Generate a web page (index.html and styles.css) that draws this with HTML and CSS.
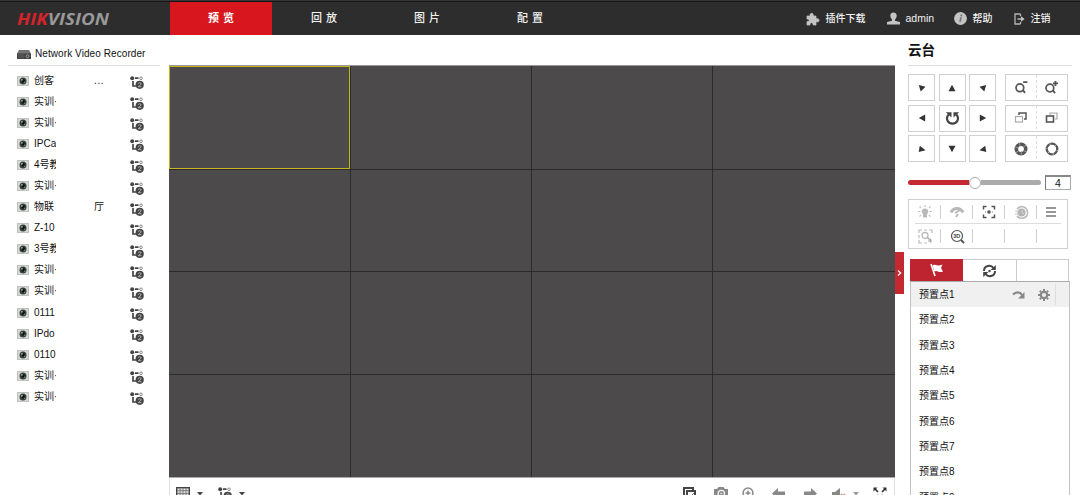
FILE: index.html
```html
<!DOCTYPE html>
<html lang="zh-CN">
<head>
<meta charset="utf-8">
<title>Network Video Recorder</title>
<link rel="stylesheet" href="styles.css">
</head>
<body>
<svg class="sprite" aria-hidden="true">
  <symbol id="camera" viewBox="0 0 12 10"><rect x=".5" y=".5" width="11" height="9" fill="#d5d9d6" stroke="#bfc3c0"/><circle cx="6" cy="5" r="3.5" fill="#39413d"/><circle cx="6.300" cy="5" r="1.8" fill="#0c1210"/><circle cx="4.900" cy="3.800" r=".9" fill="#a8b5af"/><circle cx="7.500" cy="6.300" r=".7" fill="#7f9188"/></symbol>
  <symbol id="stream" viewBox="0 0 14 13"><circle cx="2.200" cy="2.200" r="2" fill="#444"/><path d="M5 2.200h3.500M3 5v5h3" fill="none" stroke="#444" stroke-width="1.700"/><circle cx="11" cy="2.300" r="1.300" fill="none" stroke="#888"/><circle cx="9.700" cy="8.800" r="4.100" fill="#454545"/><path d="M8.200 7.500q1.500-1.600 3 0q0 1-3 3.200h3.200" fill="none" stroke="#bbb" stroke-width=".9"/></symbol>
  <symbol id="caret" viewBox="0 0 6 4"><path d="M0 0h6L3 3.600z" fill="#444"/></symbol>
  <symbol id="tri" viewBox="0 0 8 8"><path d="M4 .8l3.500 6.400h-7z" fill="#333"/></symbol>
  <symbol id="corner-top" viewBox="0 0 8 8"><path d="M.800 1l6.700 1.700-4.800 4.800z" fill="#333"/></symbol>
  <symbol id="corner-bottom" viewBox="0 0 8 8"><path d="M1.800 .7l5.700 4.500L.700 7z" fill="#333"/></symbol>
</svg>

<header class="topbar">
  <div class="logo"><svg width="96" height="20"><text class="logo-text" x="2" y="16.500" textLength="92" lengthAdjust="spacingAndGlyphs"><tspan class="logo-red">HIK</tspan>VISION</text></svg></div>
  <nav class="tabs">
    <a class="tab active">预览</a><a class="tab">回放</a><a class="tab">图片</a><a class="tab">配置</a>
  </nav>
  <div class="tools">
    <span class="tool plugin"><svg width="14" height="14" viewBox="0 0 14 14"><path d="M1 4h3.200C3 1 7.800 0 7.300 4H10v3c3-1.500 4.500 2.300 1.500 3L10 9.500V13H7.200C7 9.800 3.700 10 4 13H1V9.500C4 9.800 4 7 1 7z" fill="#c4c4c4" stroke="#c4c4c4" stroke-width=".7"/></svg>插件下载</span>
    <span class="tool user"><svg width="13" height="13" viewBox="0 0 13 13"><path d="M3.300 3.500C3.300-.4 9.700-.4 9.700 3.500C9.700 5.500 8.700 6.600 8 7.500V8.700L13 10v2.500H0V10l5-1.300V7.500C4.300 6.600 3.300 5.500 3.300 3.500z" fill="#c4c4c4"/></svg>admin</span>
    <span class="tool help"><svg width="13" height="13" viewBox="0 0 13 13"><circle cx="6.500" cy="6.500" r="6.400" fill="#c4c4c4"/><path d="M6 5.600h1.500L6.700 9.800H5.300M6.800 2.800h1.400l-.3 1.400H6.500z" fill="#777" stroke="#777" stroke-width=".4"/></svg>帮助</span>
    <span class="tool logout"><svg width="11" height="12" viewBox="0 0 11 12"><path d="M6.500 1H1v10h5.500M6.500 1v2.300M6.500 8.700V11M3.500 6h4" fill="none" stroke="#b4b4b4" stroke-width="1.300"/><path d="M7 3.200L10.600 6 7 8.800z" fill="#c4c4c4"/></svg>注销</span>
  </div>
</header>

<main class="workspace">
  <aside class="devices">
    <div class="recorder"><svg width="14" height="9" viewBox="0 0 14 9"><path d="M2 0h10l2 3.500V9H0V3.500z" fill="#747474"/><path d="M0 3.500h14V9H0z" fill="#444"/><path d="M1 5h6M1 7h6" stroke="#777" stroke-width=".6"/><circle cx="10.500" cy="6.300" r="1.400" fill="none" stroke="#bbb" stroke-width=".7"/></svg><span>Network Video Recorder</span></div>
    <ul class="channels">
      <li><svg class="cam"><use href="#camera"/></svg><span class="name">创客</span><span class="end dots">...</span><svg class="stream"><use href="#stream"/></svg></li>
      <li><svg class="cam"><use href="#camera"/></svg><span class="name">实训·</span><span class="end"></span><svg class="stream"><use href="#stream"/></svg></li>
      <li><svg class="cam"><use href="#camera"/></svg><span class="name">实训·</span><span class="end"></span><svg class="stream"><use href="#stream"/></svg></li>
      <li><svg class="cam"><use href="#camera"/></svg><span class="name">IPCa</span><span class="end"></span><svg class="stream"><use href="#stream"/></svg></li>
      <li><svg class="cam"><use href="#camera"/></svg><span class="name">4号教</span><span class="end"></span><svg class="stream"><use href="#stream"/></svg></li>
      <li><svg class="cam"><use href="#camera"/></svg><span class="name">实训·</span><span class="end"></span><svg class="stream"><use href="#stream"/></svg></li>
      <li><svg class="cam"><use href="#camera"/></svg><span class="name">物联</span><span class="end">厅</span><svg class="stream"><use href="#stream"/></svg></li>
      <li><svg class="cam"><use href="#camera"/></svg><span class="name">Z-10</span><span class="end"></span><svg class="stream"><use href="#stream"/></svg></li>
      <li><svg class="cam"><use href="#camera"/></svg><span class="name">3号教</span><span class="end"></span><svg class="stream"><use href="#stream"/></svg></li>
      <li><svg class="cam"><use href="#camera"/></svg><span class="name">实训·</span><span class="end"></span><svg class="stream"><use href="#stream"/></svg></li>
      <li><svg class="cam"><use href="#camera"/></svg><span class="name">实训·</span><span class="end"></span><svg class="stream"><use href="#stream"/></svg></li>
      <li><svg class="cam"><use href="#camera"/></svg><span class="name">0111</span><span class="end"></span><svg class="stream"><use href="#stream"/></svg></li>
      <li><svg class="cam"><use href="#camera"/></svg><span class="name">IPdo</span><span class="end"></span><svg class="stream"><use href="#stream"/></svg></li>
      <li><svg class="cam"><use href="#camera"/></svg><span class="name">0110</span><span class="end"></span><svg class="stream"><use href="#stream"/></svg></li>
      <li><svg class="cam"><use href="#camera"/></svg><span class="name">实训·</span><span class="end"></span><svg class="stream"><use href="#stream"/></svg></li>
      <li><svg class="cam"><use href="#camera"/></svg><span class="name">实训·</span><span class="end"></span><svg class="stream"><use href="#stream"/></svg></li>
    </ul>
  </aside>

  <section class="viewer">
    <div class="wall">
      <div class="cell selected"></div><div class="cell"></div><div class="cell"></div><div class="cell"></div>
      <div class="cell"></div><div class="cell"></div><div class="cell"></div><div class="cell"></div>
      <div class="cell"></div><div class="cell"></div><div class="cell"></div><div class="cell"></div>
      <div class="cell"></div><div class="cell"></div><div class="cell"></div><div class="cell"></div>
    </div>
    <div class="playbar">
      <div class="group left">
        <svg width="14" height="13" viewBox="0 0 14 13"><rect x=".7" y=".7" width="12.600" height="11.600" fill="#ddd" stroke="#444" stroke-width="1.400"/><path d="M4 1v11M7 1v11M10 1v11M1 3.700h12M1 6.500h12M1 9.300h12" stroke="#777" stroke-width=".9"/></svg>
        <svg class="caret"><use href="#caret"/></svg>
        <svg class="stream second"><use href="#stream"/></svg>
        <svg class="caret"><use href="#caret"/></svg>
      </div>
      <div class="group right">
        <svg width="13" height="13" viewBox="0 0 13 13"><path d="M1 10V1h9v2M4 12V4h8v5" fill="none" stroke="#444" stroke-width="2"/><path d="M6 11l5-5" stroke="#777"/></svg>
        <svg width="14" height="13" viewBox="0 0 14 13"><path d="M0 2h3l1.500-2h5L11 2h3v10H0z" fill="#888"/><circle cx="7.300" cy="6.500" r="3.200" fill="#888" stroke="#f4f4f4" stroke-width="1.300"/><circle cx="7.300" cy="6.500" r="1" fill="#ddd"/></svg>
        <svg width="13" height="14" viewBox="0 0 13 14"><circle cx="6" cy="6" r="4.900" fill="none" stroke="#888" stroke-width="1.500"/><path d="M3.500 6h5M6 3.500v5M9.500 9.500l3 3" stroke="#888" stroke-width="1.500"/></svg>
        <svg width="14" height="12" viewBox="0 0 14 12"><path d="M6 0v3.500h7V8H6v3L0 5.500z" fill="#888"/></svg>
        <svg width="14" height="12" viewBox="0 0 14 12"><path d="M8 0v3.500H1V8h7v3l6-5.500z" fill="#888"/></svg>
        <svg width="14" height="12" viewBox="0 0 14 12"><path d="M0 4h3l5-4v12L3 9H0z" fill="#888"/><path d="M9 6l4 4M13 6l-4 4" stroke="#d87878" stroke-width="1.500"/></svg>
        <svg class="caret pale"><use href="#caret"/></svg>
        <svg width="14" height="13" viewBox="0 0 14 13"><path d="M.5 4.500v-4h4zM9.500.500h4v4zM.500 8.500v4h4zM13.500 8.500v4h-4z" fill="#333"/><path d="M2 2l3 3M12 2L9 5M2 11l3-3M12 11L9 8" stroke="#333" stroke-width="1.700"/></svg>
      </div>
    </div>
  </section>

  <aside class="ptz">
    <div class="handle"><svg width="5" height="8" viewBox="0 0 5 8"><path d="M1 1.500L3.700 4 1 6.500" fill="none" stroke="#fff" stroke-width="1.200"/></svg></div>
    <h2>云台</h2>
    <div class="controls">
      <div class="pad">
        <button><svg class="arrow"><use href="#corner-top"/></svg></button>
        <button><svg class="arrow"><use href="#tri"/></svg></button>
        <button><svg class="arrow flip"><use href="#corner-top"/></svg></button>
        <button><svg class="arrow w"><use href="#tri"/></svg></button>
        <button><svg width="15" height="15" viewBox="0 0 15 15"><path d="M3.700 3.500C0 7.500 3 12.700 7.500 12.700s7.500-5.200 3.800-9.200" fill="none" stroke="#444" stroke-width="2.200"/><path d="M.800 1.200h5.700v5.200zM14.200 1.200H8.500v5.200z" fill="#444"/></svg></button>
        <button><svg class="arrow e"><use href="#tri"/></svg></button>
        <button><svg class="arrow"><use href="#corner-bottom"/></svg></button>
        <button><svg class="arrow s"><use href="#tri"/></svg></button>
        <button><svg class="arrow flip"><use href="#corner-bottom"/></svg></button>
      </div>
      <div class="lens">
        <div class="pair">
          <svg width="15" height="15" viewBox="0 0 14 14"><circle cx="5.500" cy="7.300" r="3.600" fill="none" stroke="#555" stroke-width="1.600"/><path d="M8.300 9.500l2 2.500M8.500 2h4" stroke="#555" stroke-width="1.700"/></svg>
          <svg width="15" height="15" viewBox="0 0 14 14"><circle cx="5.500" cy="7.500" r="3.600" fill="none" stroke="#555" stroke-width="1.600"/><path d="M8.300 9.700l2 2.500M8.300 3.200H13M10.700 1v4.500" stroke="#555" stroke-width="1.700"/></svg>
        </div>
        <div class="pair">
          <svg width="14" height="14" viewBox="0 0 14 14"><path d="M5 4V2h7v6h-2" fill="none" stroke="#555" stroke-width="1.500"/><rect x="1.500" y="5.500" width="7" height="5.500" fill="#fff" stroke="#aaa" stroke-width="1.200"/></svg>
          <svg width="14" height="14" viewBox="0 0 14 14"><path d="M5 4V2h7v6h-2" fill="none" stroke="#aaa" stroke-width="1.200"/><rect x="1.500" y="5" width="7" height="6" fill="#fff" stroke="#555" stroke-width="1.600"/></svg>
        </div>
        <div class="pair">
          <svg width="14" height="14" viewBox="0 0 14 14"><circle cx="7" cy="7" r="4.700" fill="none" stroke="#555" stroke-width="3.600"/><path d="M5 .5l1.500 4M12.500 3L9 5.300M13 10l-4-1.500M7 13.500L7.500 9M1.500 11L5 8.500M1 5l4 1" stroke="#aaa" stroke-width=".8"/></svg>
          <svg width="14" height="14" viewBox="0 0 14 14"><circle cx="7" cy="7" r="5.300" fill="none" stroke="#555" stroke-width="2.300"/><path d="M4.500 .5l.8 2.500M12 2l-2 2M13.500 9l-2-.7M8.500 13.500L8 11M2 12l2-2M.5 6l2 .5" stroke="#ccc" stroke-width=".8"/></svg>
        </div>
      </div>
    </div>
    <div class="speed"><div class="track"><div class="fill"></div><div class="thumb"></div><div class="rest"></div></div><div class="value">4</div></div>
    <div class="toolbox">
      <div class="toolrow first">
        <span><svg width="16" height="16" viewBox="0 0 16 16"><path d="M6 10.500C3 6.500 6 4.500 8 4.500s5 2 2 6v3H6z" fill="#b9b9b9"/><path d="M8 1v2M2.500 2.500L4 4M13.500 2.500L12 4M1 7.500h2.500M12.500 7.500H15M2.500 12.500L4 11M13.500 12.500L12 11" stroke="#c4c4c4" stroke-width="1.200"/></svg></span>
        <span><svg width="16" height="14" viewBox="0 0 16 14"><path d="M2 7.500C4.500 2 11.500 2 14 7.500" fill="none" stroke="#b8b8b8" stroke-width="3"/><path d="M6 8l5-3M7 12l2-3" stroke="#b8b8b8" stroke-width="2"/></svg></span>
        <span><svg width="14" height="14" viewBox="0 0 14 14"><path d="M1.500 4.500v-3h3M9.500 1.500h3v3M12.500 9.500v3h-3M4.500 12.500h-3v-3" fill="none" stroke="#555" stroke-width="1.500"/><circle cx="7" cy="7" r="1.800" fill="#555"/><path d="M3 7h1M10 7h1" stroke="#888"/></svg></span>
        <span><svg width="15" height="15" viewBox="0 0 15 15"><path d="M3 4C6 0 13 1 13.500 7.500S5 14.500 3 11" fill="none" stroke="#bbb" stroke-width="1.600"/><circle cx="7.500" cy="7.500" r="4" fill="#b2b2b2"/><path d="M1 6h5M1 9h5" stroke="#c4c4c4" stroke-width="1"/><path d="M8 5v3l2 1" fill="none" stroke="#e0e0e0" stroke-width=".8"/></svg></span>
        <span><svg width="12" height="12" viewBox="0 0 12 12"><path d="M1 2h10M1 6h10M1 10h10" stroke="#777" stroke-width="1.300"/></svg></span>
      </div>
      <div class="toolrow">
        <span><svg width="15" height="15" viewBox="0 0 15 15"><path d="M1 4V1h3M6 1h3M11 1h3v3M1 6v3M1 11v3h3M6 14h3" fill="none" stroke="#bbb" stroke-width="1.200"/><circle cx="7" cy="6.500" r="3" fill="none" stroke="#bbb" stroke-width="1.300"/><path d="M9.500 8.500l4 4M10 12h4M12.500 9.500v4" stroke="#aaa" stroke-width="1.200"/></svg></span>
        <span><svg width="15" height="15" viewBox="0 0 15 15"><circle cx="7" cy="7" r="5.500" fill="none" stroke="#555" stroke-width="1.200"/><path d="M11 11l3 3" stroke="#555" stroke-width="2"/><text class="three-d" x="3.200" y="9.200">3D</text></svg></span>
        <span></span><span></span><span></span>
      </div>
    </div>
    <div class="preset-tabs">
      <div class="ptab active"><svg width="14" height="14" viewBox="0 0 14 14"><path d="M1 1l4 12" stroke="#fff" stroke-width="1.600"/><path d="M2.500 2.500C5 .5 6 4 12.500 1.500L11 5l2 3.500C8 10.500 7.500 6.500 4.500 8.500z" fill="#fff"/></svg></div>
      <div class="ptab"><svg width="15" height="14" viewBox="0 0 15 14"><path d="M2 7C2 1 9 .5 11.500 4M13 7c0 6-7 6.500-9.500 3" fill="none" stroke="#444" stroke-width="2"/><path d="M13.800 1v5H8.500zM1.200 13V8h5.300z" fill="#444"/><circle cx="7.500" cy="7" r="1.300" fill="#555"/></svg></div>
      <div class="ptab"></div>
    </div>
    <ul class="presets">
      <li class="current"><span>预置点1</span><svg class="goto" width="13" height="10" viewBox="0 0 13 10"><path d="M1 4.500C4 1.500 8 1.500 10 5" fill="none" stroke="#888" stroke-width="2.200"/><path d="M12.500 2v6.500H6z" fill="#888"/></svg><svg class="gear" width="12" height="12" viewBox="0 0 12 12"><circle cx="6" cy="6" r="3.200" fill="none" stroke="#888" stroke-width="2.200"/><path d="M6 0v2M6 10v2M0 6h2M10 6h2M1.800 1.800l1.300 1.300M8.900 8.900l1.300 1.300M10.200 1.800L8.900 3.100M3.100 8.900l-1.300 1.300" stroke="#888" stroke-width="2"/></svg><i class="edge"></i></li>
      <li>预置点2</li><li>预置点3</li><li>预置点4</li><li>预置点5</li><li>预置点6</li><li>预置点7</li><li>预置点8</li><li>预置点9</li>
    </ul>
  </aside>
</main>
</body>
</html>
```

FILE: styles.css
```css
* { box-sizing: border-box; }
body {
  margin: 0; height: 495px; overflow: hidden; background: #fff; color: #111;
  font: 10px/14px "Liberation Sans", "Noto Sans CJK SC", sans-serif;
}
svg { display: block; flex: none; }
ul { margin: 0; padding: 0; list-style: none; }
.sprite { position: absolute; width: 0; height: 0; }

.topbar { display: flex; height: 35px; padding-top: 1px; background: #2d2d2d; border-top: 1px solid #363636; box-shadow: inset 0 1px #151515; color: #f2f2f2; }
.logo { width: 170px; padding: 6px 0 0 15px; }
.logo-text { font: italic 700 16px "Open Sans", "Liberation Sans", sans-serif; fill: #999; }
.logo-red { fill: #d3242b; }
.tabs { display: flex; gap: 1px; }
.tab { width: 102px; height: 33px; padding-left: 4px; text-align: center; font-size: 11px; line-height: 33px; letter-spacing: 4px; font-weight: 500; }
.tab.active { background: #d7171d; color: #fff; font-weight: 700; }
.tools { display: flex; flex: 1; padding-left: 224.5px; font-weight: 500; line-height: 33px; white-space: nowrap; }
.tool { display: flex; align-items: center; gap: 6px; height: 33px; }
.plugin { width: 81px; }
.user { width: 67px; font-size: 10.5px; }
.help { width: 60px; }

.workspace { display: grid; grid-template-columns: 169px 726px 185px; height: 460px; }
.recorder { display: flex; align-items: center; gap: 5px; height: 31px; width: 152px; margin-left: 8px; padding: 8px 0 0 9px; border-bottom: 1px solid #ddd; letter-spacing: .08px; white-space: nowrap; }
.recorder span { margin-left: -1px; }
.channels { padding-top: 4px; }
.channels li { display: flex; align-items: center; height: 21.1px; padding-left: 17px; }
.cam { width: 12px; height: 10px; }
.name { width: 21.5px; margin-left: 5px; overflow: hidden; white-space: nowrap; }
.end { width: 36px; margin-left: 38.5px; }
.dots { letter-spacing: .6px; }
.stream { width: 14px; height: 13px; margin-top: 4px; }

.viewer { padding-top: 30px; }
.wall { display: grid; grid-template-columns: 180px 180px 180px 1fr; grid-template-rows: repeat(4, 1fr); gap: 1px; height: 413px; padding: 1px; background: #2c2b2b; border-top: 1px solid #999; border-bottom: 1px solid #aaa; }
.cell { background: #4c4a4b; }
.cell.selected { border: 1px solid #c5b51f; margin: -1px 0 0 0; }
.cell:nth-child(-n+4) { margin-top: -1px; }
.cell:nth-child(4n+1) { margin-left: -1px; }
.cell:nth-child(4n) { margin-right: -1px; }
.cell:nth-child(n+13) { margin-bottom: -1px; }
.playbar { display: flex; justify-content: space-between; height: 17px; padding: 9px 7px 0 6px; border: solid #ddd; border-width: 0 1px; overflow: hidden; }
.group { display: flex; align-items: flex-start; }
.caret { width: 6px; height: 4px; margin-top: 5px; }
.left .caret { margin-left: 7px; }
.stream.second { margin: 0 0 0 15px; }
.right > :nth-child(2) { margin-left: 18px; }
.right > :nth-child(3) { margin-left: 14px; }
.right > :nth-child(4) { margin-left: 17px; margin-top: 1px; }
.right > :nth-child(5) { margin-left: 17px; margin-top: 1px; }
.right > :nth-child(6) { margin-left: 15px; margin-top: 1px; }
.right > :nth-child(7) { margin-left: 7px; }
.right > :nth-child(8) { margin-left: 14px; }
.pale { opacity: .55; }

.ptz { position: relative; padding-left: 13px; }
.handle { position: absolute; left: 0; top: 217px; width: 9px; height: 42px; display: flex; align-items: center; justify-content: center; background: #c42932; }
h2 { margin: 0 0 8px; width: 164px; height: 31px; border-bottom: 1px solid #ddd; font-size: 13.5px; line-height: 31px; }
.controls { display: flex; gap: 9px; height: 88px; }
.pad { display: grid; grid-template-columns: repeat(3, 27px); gap: 3.500px; width: 88px; }
.pad button { display: flex; align-items: center; justify-content: center; height: 27px; padding: 0; background: #fff; border: 1px solid #d0d0d0; }
.arrow { width: 8px; height: 8px; }
.flip { transform: scaleX(-1); }
.w { transform: rotate(-90deg); }
.e { transform: rotate(90deg); }
.s { transform: rotate(180deg); }
.lens { display: grid; gap: 3.500px; width: 63px; }
.pair { display: grid; grid-template-columns: 1fr 1fr; place-items: center; height: 27px; border: 1px solid #d0d0d0; background: repeating-linear-gradient(#ddd 0 3px, #fff 3px 5px) center / 1px 100% no-repeat; }
.speed { display: flex; align-items: center; justify-content: space-between; width: 163px; height: 15px; margin-top: 13px; }
.track { display: flex; align-items: center; width: 133px; }
.fill { width: 61px; height: 5px; border-radius: 3px 0 0 3px; background: #c42932; }
.thumb { width: 12px; height: 12px; border: 1px solid #aaa; border-radius: 50%; background: #fff; }
.rest { flex: 1; height: 5px; border-radius: 0 3px 3px 0; background: #ababab; }
.value { width: 26px; height: 15px; border: 1px solid #aaa; border-top: 2px solid #888; border-left-color: #777; text-align: center; line-height: 13px; font-size: 10.5px; }
.toolbox { width: 160px; height: 50px; margin-top: 9px; border: 1px solid #d0d0d0; }
.toolrow { display: grid; grid-template-columns: 32px 32px 32px 32px 28px; height: 24px; }
.toolrow.first { background: linear-gradient(#ddd, #ddd) center bottom / 146px 1px no-repeat; }
.toolrow span { display: flex; align-items: center; justify-content: center; background: linear-gradient(#d0d0d0, #d0d0d0) right center / 1px 14px no-repeat; }
.toolrow span:last-child { background: none; }
.three-d { font: bold 5.500px "Liberation Sans", sans-serif; fill: #444; }
.preset-tabs { display: grid; grid-template-columns: 53px 54px 52px; width: 159px; height: 22px; margin: 10px 0 0 2px; }
.ptab { display: flex; align-items: center; justify-content: center; border: solid #ccc; border-width: 1px 1px 0 0; }
.ptab.active { background: #bd2430; border: 0; }
.presets { width: 160px; margin-left: 2px; border: 1px solid #c2c2c2; border-top-color: #aaa; }
.presets li { display: flex; align-items: center; height: 25.3px; padding: 1px 0 0 8px; }
.presets .current { background: #f0f0f0; padding-top: 0; }
.goto { margin-left: 57px; }
.gear { margin-left: 13px; }
.edge { width: 1px; height: 21px; margin-left: 5px; background: #ddd; }
```
